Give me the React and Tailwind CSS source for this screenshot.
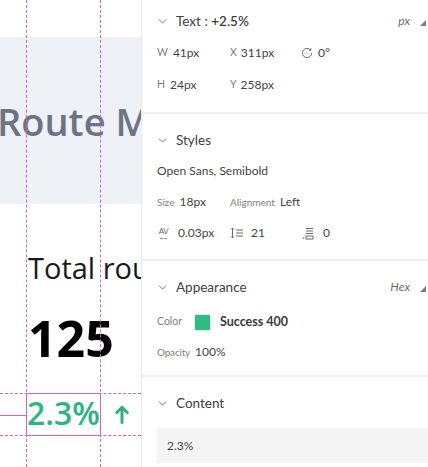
import React from "react";
import { ChevronDown } from "lucide-react";

const guide = "#d35fd6";

function SectionHeader({ title, right }) {
  return (
    <div className="w-full flex items-center justify-between h-6 pr-[2px]">
      <div className="flex items-center">
        <ChevronDown size={13} strokeWidth={1.5} className="text-[#555] -ml-[1px]" />
        <span className="ml-[7px] text-[13.5px] text-[#404040]">{title}</span>
      </div>
      {right && (
        <div className="flex items-center">
          <span className="italic text-[12px] text-[#6a6a6a]">{right}</span>
          <svg width="6" height="6" viewBox="0 0 6 6" className="ml-[10px] mt-[4px]">
            <path d="M6 0 L6 6 L0 6 Z" fill="#7a7a7a" />
          </svg>
        </div>
      )}
    </div>
  );
}

function Divider() {
  return <div className="h-[2px] bg-[#f0f0f0]" />;
}

function RotateIcon() {
  return (
    <svg width="12" height="12" viewBox="0 0 12 12" fill="none" stroke="#6a6a6a" strokeWidth="1">
      <path d="M9.6 3.2 A4.6 4.6 0 1 0 10.6 6" />
      <path d="M9.9 1.2 L9.7 3.4 L7.6 3.1" />
      <circle cx="6" cy="6" r="0.6" fill="#6a6a6a" stroke="none" />
    </svg>
  );
}

function TrackingIcon() {
  return (
    <span className="inline-flex flex-col items-center w-[13px] h-[14px]">
      <span className="text-[8px] leading-none text-[#6a6a6a] tracking-[-0.5px] mt-[1px]">AV</span>
      <svg width="13" height="5" viewBox="0 0 13 5" fill="none" stroke="#6a6a6a" strokeWidth="0.9" className="mt-[2px]">
        <path d="M1 2.5 H12 M3 0.8 L1 2.5 L3 4.2 M10 0.8 L12 2.5 L10 4.2" />
      </svg>
    </span>
  );
}

function LineHeightIcon() {
  return (
    <svg width="14" height="12" viewBox="0 0 14 12" fill="none" stroke="#6a6a6a" strokeWidth="1">
      <path d="M2.5 1 V11 M1 2.5 L2.5 1 L4 2.5 M1 9.5 L2.5 11 L4 9.5" />
      <path d="M6 3 H13 M6 6 H13 M6 9 H13" />
    </svg>
  );
}

function ParagraphIcon() {
  return (
    <svg width="12" height="13" viewBox="0 0 12 13" fill="none" stroke="#6a6a6a" strokeWidth="1">
      <path d="M4 1.5 H11 M4 4 H11 M4 6.5 H11" />
      <rect x="4" y="9" width="7" height="3" />
      <circle cx="1.5" cy="11" r="0.8" fill="#6a6a6a" stroke="none" />
    </svg>
  );
}

function Label({ children, className = "" }) {
  return <span className={`text-[10.5px] text-[#808080] ${className}`}>{children}</span>;
}

function Value({ children, className = "" }) {
  return <span className={`text-[12px] text-[#444] ${className}`}>{children}</span>;
}

function Canvas() {
  return (
    <div
      className="relative shrink-0 w-[141px] h-full overflow-hidden bg-white"
      style={{ fontFamily: "'Open Sans', sans-serif" }}
    >
      <div className="h-[37px]" />
      <div className="h-[167px] bg-[#eef1f5] flex items-center">
        <span className="whitespace-nowrap text-[38px] font-semibold text-[#6c7384] -ml-[3px] mt-[1px]">
          Route Management
        </span>
      </div>
      <div className="pl-[28px]">
        <div className="mt-[49px] text-[29px] leading-none text-[#1a1a1a] whitespace-nowrap">
          Total routes
        </div>
        <div className="mt-[31px] text-[50px] leading-none font-bold text-black">125</div>
        <div className="mt-[34px] flex items-center whitespace-nowrap">
          <span className="text-[32px] leading-none font-semibold text-[#2db47f] -ml-[1px]">2.3%</span>
          <svg width="14" height="19" viewBox="0 0 14 19" className="ml-[15px] mt-[2px]" fill="none" stroke="#2db47f" strokeWidth="3" strokeLinecap="round" strokeLinejoin="round">
            <path d="M7 17.5 V2.5 M1.8 7.5 L7 2.2 L12.2 7.5" />
          </svg>
        </div>
      </div>

      {/* guides */}
      <div className="absolute top-0 bottom-0 left-[26px] border-l border-dashed" style={{ borderColor: guide }} />
      <div className="absolute top-0 bottom-0 left-[100px] border-l border-dashed" style={{ borderColor: guide }} />
      <div className="absolute left-0 right-0 top-[393px] border-t border-dashed" style={{ borderColor: guide }} />
      <div className="absolute left-0 right-0 top-[435px] border-t border-dashed" style={{ borderColor: guide }} />
      <div className="absolute left-[26px] top-[393px] w-[75px] h-[43px] border" style={{ borderColor: guide }} />
      <div className="absolute left-0 top-[415px] w-[26px] border-t" style={{ borderColor: guide }} />
    </div>
  );
}

function Inspector() {
  return (
    <div
      className="w-[287px] shrink-0 h-full bg-white border-l border-[#e9e9e9] overflow-hidden"
      style={{ fontFamily: "Lato, 'Noto Sans', sans-serif" }}
    >
      {/* Text */}
      <div className="pl-[15px] pt-[9px] pb-[15px]">
        <SectionHeader
          title={
            <>
              Text : <span className="font-semibold">+2.5%</span>
            </>
          }
          right="px"
        />
        <div className="mt-2 h-6 grid grid-cols-[73px_71px_auto] items-center">
          <div className="flex items-center gap-[5px]">
            <Label>W</Label>
            <Value>41px</Value>
          </div>
          <div className="flex items-center gap-[4px]">
            <Label>X</Label>
            <Value>311px</Value>
          </div>
          <div className="flex items-center gap-[5px]">
            <RotateIcon />
            <Value>0°</Value>
          </div>
        </div>
        <div className="mt-2 h-6 grid grid-cols-[73px_71px_auto] items-center">
          <div className="flex items-center gap-[5px]">
            <Label>H</Label>
            <Value>24px</Value>
          </div>
          <div className="flex items-center gap-[4px]">
            <Label>Y</Label>
            <Value>258px</Value>
          </div>
        </div>
      </div>
      <Divider />

      {/* Styles */}
      <div className="pl-[15px] pt-[14px] pb-[14px]">
        <SectionHeader title="Styles" />
        <div className="mt-[7px] h-6 flex items-center">
          <Value>Open Sans, Semibold</Value>
        </div>
        <div className="mt-[7px] h-6 grid grid-cols-[73px_71px_auto] items-center">
          <div className="flex items-center gap-[5px]">
            <Label className="text-[10px]">Size</Label>
            <Value>18px</Value>
          </div>
          <div className="flex items-center gap-[5px] whitespace-nowrap">
            <Label className="text-[10px]">Alignment</Label>
            <Value>Left</Value>
          </div>
        </div>
        <div className="mt-[7px] h-6 grid grid-cols-[73px_72px_auto] items-center">
          <div className="flex items-center gap-[8px]">
            <TrackingIcon />
            <Value>0.03px</Value>
          </div>
          <div className="flex items-center gap-[7px]">
            <LineHeightIcon />
            <Value>21</Value>
          </div>
          <div className="flex items-center gap-[9px]">
            <ParagraphIcon />
            <Value>0</Value>
          </div>
        </div>
      </div>
      <Divider />

      {/* Appearance */}
      <div className="pl-[15px] pt-[14px] pb-[11px]">
        <SectionHeader title="Appearance" right="Hex" />
        <div className="mt-[11px] h-6 flex items-center">
          <Label className="w-[37px]">Color</Label>
          <span className="w-[17px] h-[17px] rounded-[2px] bg-[#2fbd84] border border-[#e6e6e6]" />
          <span className="ml-[9px] text-[12.5px] font-bold text-[#383838]">Success 400</span>
        </div>
        <div className="mt-[6px] h-6 flex items-center">
          <Label className="w-[38px] text-[10px] tracking-[-0.2px]">Opacity</Label>
          <Value>100%</Value>
        </div>
      </div>
      <Divider />

      {/* Content */}
      <div className="pl-[15px] pt-[14px]">
        <SectionHeader title="Content" />
        <div className="mt-[13px] h-[35px] bg-[#f4f4f4] flex items-center pl-[10px]">
          <Value>2.3%</Value>
        </div>
      </div>
    </div>
  );
}

export default function App() {
  return (
    <div className="w-[428px] h-[467px] flex bg-white overflow-hidden">
      <Canvas />
      <Inspector />
    </div>
  );
}
